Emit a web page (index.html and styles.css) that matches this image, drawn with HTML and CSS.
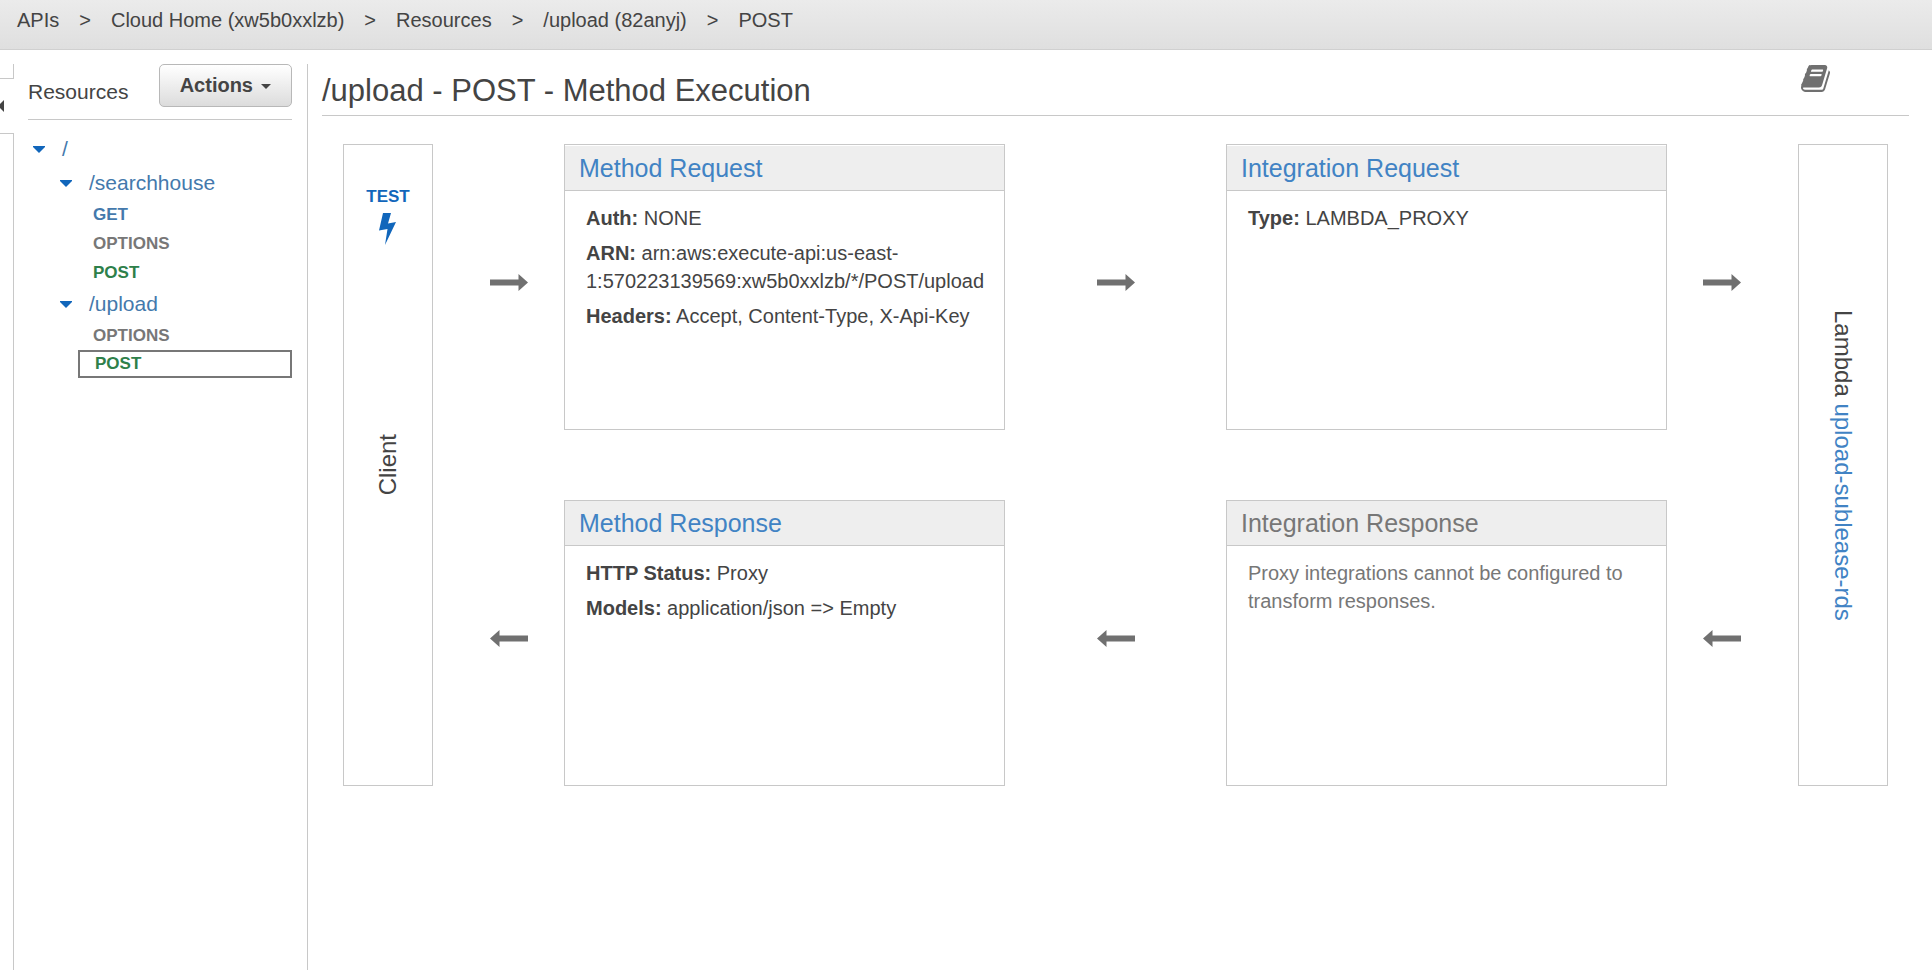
FILE: index.html
```html
<!DOCTYPE html>
<html lang="en">
<head>
<meta charset="utf-8">
<title>/upload - POST - Method Execution</title>
<link rel="stylesheet" href="styles.css">
</head>
<body>
<svg class="defs" aria-hidden="true">
  <symbol id="caret" viewBox="0 0 12 7"><path d="M0 0h12v1L6 7 0 1z"/></symbol>
  <symbol id="arrow" viewBox="0 0 38 17"><path d="M0 5.500h28.500V0L38 8.500 28.500 17v-5.500H0z"/></symbol>
</svg>
<header class="topbar">
  <nav aria-label="Breadcrumb">
    <ol class="crumbs">
      <li><a href="#">APIs</a></li>
      <li><a href="#">Cloud Home (xw5b0xxlzb)</a></li>
      <li><a href="#">Resources</a></li>
      <li><a href="#">/upload (82anyj)</a></li>
      <li><a href="#">POST</a></li>
    </ol>
  </nav>
</header>
<div class="layout">
  <div class="rail">
    <div class="rail-top"></div>
    <button class="rail-toggle" type="button" aria-label="Show the API list">
      <svg viewBox="0 0 4 12"><path d="M4 0v12L0 8V4z"/></svg>
    </button>
    <div class="rail-rest"></div>
  </div>
  <aside class="sidebar">
    <div class="sidebar-head">
      <h2>Resources</h2>
      <button class="actions" type="button">Actions <svg viewBox="0 0 10 5"><path d="M0 0h10L5 5z"/></svg></button>
    </div>
    <ul class="tree">
      <li>
        <div class="node"><button class="toggle" type="button" aria-label="Collapse /"><svg><use href="#caret"/></svg></button><a href="#">/</a></div>
        <ul class="branch">
          <li>
            <div class="node"><button class="toggle" type="button" aria-label="Collapse /searchhouse"><svg><use href="#caret"/></svg></button><a href="#">/searchhouse</a></div>
            <ul class="methods">
              <li><a class="method get" href="#">GET</a></li>
              <li><a class="method options" href="#">OPTIONS</a></li>
              <li><a class="method post" href="#">POST</a></li>
            </ul>
          </li>
          <li>
            <div class="node"><button class="toggle" type="button" aria-label="Collapse /upload"><svg><use href="#caret"/></svg></button><a href="#">/upload</a></div>
            <ul class="methods">
              <li><a class="method options" href="#">OPTIONS</a></li>
              <li><a class="method post selected" href="#" aria-current="true">POST</a></li>
            </ul>
          </li>
        </ul>
      </li>
    </ul>
  </aside>
  <main class="main">
    <div class="main-head">
      <h1>/upload - POST - Method Execution</h1>
      <a class="docs" href="#" aria-label="Documentation">
        <svg viewBox="0 128 1664 1536"><path d="M1639 478q40 57 18 129l-275 906q-19 64-76.500 107.500t-122.500 43.500h-923q-77 0-148.500-53.500t-99.500-131.500q-24-67-2-127 0-4 3-27t4-37q1-8-3-21.500t-3-19.500q2-11 8-21t16.500-23.500 16.500-23.500q23-38 45-91.500t30-91.500q3-10 .5-30t-.5-28q3-11 17-28t17-23q21-36 42-92t25-90q1-9-2.500-32t.5-28q4-13 22-30.500t22-22.500q19-26 42.500-84.500t27.500-96.500q1-8-3-25.500t-2-26.500q2-8 9-18t18-23 17-21q8-12 16.500-30.500t15-35 16-36 19.500-32 26.500-23.500 36-11.500 47.500 5.500l-1 3q38-9 51-9h761q74 0 114 56t18 130l-274 906q-36 119-71.500 153.500t-128.500 34.500h-869q-27 0-38 15-11 16-1 43 24 70 144 70h923q29 0 56-15.500t35-41.500l300-987q7-22 5-57 38 15 59 43zm-1064 2q-4 13 2 22.500t20 9.500h608q13 0 25.500-9.500t16.500-22.500l21-64q4-13-2-22.500t-20-9.500h-608q-13 0-25.500 9.500t-16.500 22.500zm-83 256q-4 13 2 22.500t20 9.500h608q13 0 25.500-9.500t16.500-22.500l21-64q4-13-2-22.500t-20-9.500h-608q-13 0-25.500 9.500t-16.500 22.500z"/></svg>
      </a>
    </div>
    <div class="flow">
      <section class="endpoint">
        <a class="test" href="#">TEST
          <svg viewBox="0 0 17 32"><path d="M4 0h8L9 10.500 17 9 6 32 8.500 16 0 17.500z"/></svg>
        </a>
        <span class="vertical up">Client</span>
      </section>
      <div class="step first"><svg><use href="#arrow"/></svg></div>
      <section class="card request">
        <h3><a href="#">Method Request</a></h3>
        <div class="card-body">
          <p><b>Auth:</b> NONE</p>
          <p><b>ARN:</b> arn:aws:execute-api:us-east-<wbr>1:570223139569:xw5b0xxlzb/*/POST/upload</p>
          <p><b>Headers:</b> Accept, Content-Type, X-Api-Key</p>
        </div>
      </section>
      <div class="step"><svg><use href="#arrow"/></svg></div>
      <section class="card request">
        <h3><a href="#">Integration Request</a></h3>
        <div class="card-body">
          <p><b>Type:</b> LAMBDA_PROXY</p>
        </div>
      </section>
      <div class="step last"><svg><use href="#arrow"/></svg></div>
      <section class="endpoint">
        <span class="vertical">Lambda <a href="#">upload-sublease-rds</a></span>
      </section>
      <div class="step first back"><svg><use href="#arrow"/></svg></div>
      <section class="card">
        <h3><a href="#">Method Response</a></h3>
        <div class="card-body">
          <p><b>HTTP Status:</b> Proxy</p>
          <p><b>Models:</b> application/json =&gt; Empty</p>
        </div>
      </section>
      <div class="step back"><svg><use href="#arrow"/></svg></div>
      <section class="card disabled">
        <h3>Integration Response</h3>
        <div class="card-body">
          <p>Proxy integrations cannot be configured to transform responses.</p>
        </div>
      </section>
      <div class="step last back"><svg><use href="#arrow"/></svg></div>
    </div>
  </main>
</div>
</body>
</html>
```
FILE: styles.css
```css
:root {
  --text: #444;
  --muted: #777;
  --line: #c8c8c8;
  --link: #4183c4;
  --blue: #1166bb;
}

* { box-sizing: border-box; }

body {
  margin: 0;
  min-height: 100vh;
  display: flex;
  flex-direction: column;
  background: #fff;
  color: var(--text);
  font: 20px/28px "Liberation Sans", Arial, sans-serif;
}

h1, h2, h3, p, ul, ol { margin: 0; padding: 0; font-weight: normal; }
ul, ol { list-style: none; }
a { color: inherit; text-decoration: none; }
button { font: inherit; color: inherit; cursor: pointer; }
svg { display: block; fill: currentColor; }
.defs { display: none; }

/* Breadcrumb bar */
.topbar {
  height: 50px;
  padding: 6px 17px;
  border-bottom: 1px solid #d0d0d0;
  background: linear-gradient(#ebebeb, #dfdfdf);
}
.crumbs { display: flex; }
.crumbs li + li::before { content: ">"; margin: 0 20px; }

.layout { flex: 1; display: flex; padding-top: 14px; }

/* Collapsed API list */
.rail { width: 14px; display: flex; flex-direction: column; }
.rail-top {
  height: 15px;
  border-right: 1px solid var(--line);
  border-bottom: 1px solid var(--line);
}
.rail-toggle {
  height: 54px;
  padding: 0;
  border: 0;
  background: none;
}
.rail-toggle svg { width: 4px; height: 12px; }
.rail-rest {
  flex: 1;
  border-top: 1px solid var(--line);
  border-right: 1px solid var(--line);
}

/* Resource tree */
.sidebar {
  width: 294px;
  padding: 0 15px 0 14px;
  border-right: 1px solid var(--line);
}
.sidebar-head {
  height: 56px;
  display: flex;
  justify-content: space-between;
  align-items: flex-start;
  border-bottom: 1px solid var(--line);
}
.sidebar-head h2 { padding-top: 14px; font-size: 21px; }
.actions {
  height: 43px;
  padding: 0 20px 2px;
  display: flex;
  align-items: center;
  gap: 8px;
  border: 1px solid #b8b8b8;
  border-radius: 5px;
  background: linear-gradient(#fff, #dcdcdc);
  font-weight: bold;
}
.actions svg { width: 10px; height: 5px; margin-top: 4px; }
.tree { padding-top: 12px; }
.node {
  height: 34px;
  display: flex;
  align-items: center;
  gap: 17px;
  color: #4479ac;
  font-size: 21px;
}
.toggle {
  padding: 0 0 0 5px;
  border: 0;
  background: none;
  color: var(--blue);
}
.toggle svg { width: 12px; height: 7px; }
.branch { padding-left: 27px; }
.methods { padding-left: 23px; }
.method {
  display: block;
  padding-left: 15px;
  font-size: 17px;
  line-height: 29px;
  font-weight: bold;
}
.get { color: #4479ac; }
.options { color: var(--muted); }
.post { color: #2e804a; }
.selected { border: 2px solid #777; line-height: 24px; }

/* Method execution */
.main { flex: 1; padding: 0 23px 0 14px; }
.main-head {
  height: 52px;
  padding-right: 79px;
  display: flex;
  justify-content: space-between;
  align-items: flex-start;
  border-bottom: 1px solid var(--line);
}
.main-head h1 { padding-top: 9px; font-size: 31px; line-height: 36px; }
.docs { padding-top: 1px; color: #707070; }
.docs svg { width: 29px; height: 27px; }

.flow {
  display: grid;
  grid-template-columns: 90px 131px minmax(0, 441fr) minmax(0, 221fr) minmax(0, 441fr) 131px 90px;
  grid-auto-rows: minmax(286px, auto);
  row-gap: 70px;
  padding: 28px 21px;
}
.endpoint {
  grid-row: span 2;
  display: grid;
  grid-template-rows: 1fr auto 1fr;
  justify-items: center;
  border: 1px solid var(--line);
}
.test {
  padding-top: 42px;
  color: var(--blue);
  font-size: 17px;
  line-height: 20px;
  font-weight: bold;
}
.test svg { width: 17px; height: 32px; margin: 6px auto 0; }
.vertical {
  grid-row: 2;
  writing-mode: vertical-rl;
  font-size: 24px;
}
.up { transform: rotate(180deg); }
.vertical a, .card h3 a { color: var(--link); }

.step {
  display: flex;
  align-items: center;
  justify-content: center;
  padding-bottom: 10px;
  color: #707070;
}
.step svg { width: 38px; height: 17px; }
.first { justify-content: flex-end; padding-right: 36px; }
.last { justify-content: flex-start; padding-left: 36px; }
.back svg { transform: scaleX(-1); }

.card { border: 1px solid var(--line); }
.request { padding-top: 1px; }
.card h3 {
  height: 45px;
  padding: 0 14px;
  border-bottom: 1px solid var(--line);
  background: #eee;
  font-size: 25px;
  line-height: 44px;
}
.card-body {
  padding: 13px 21px;
  display: grid;
  gap: 7px;
}
.card-body p { min-width: 0; }
.disabled { color: var(--muted); }
```
